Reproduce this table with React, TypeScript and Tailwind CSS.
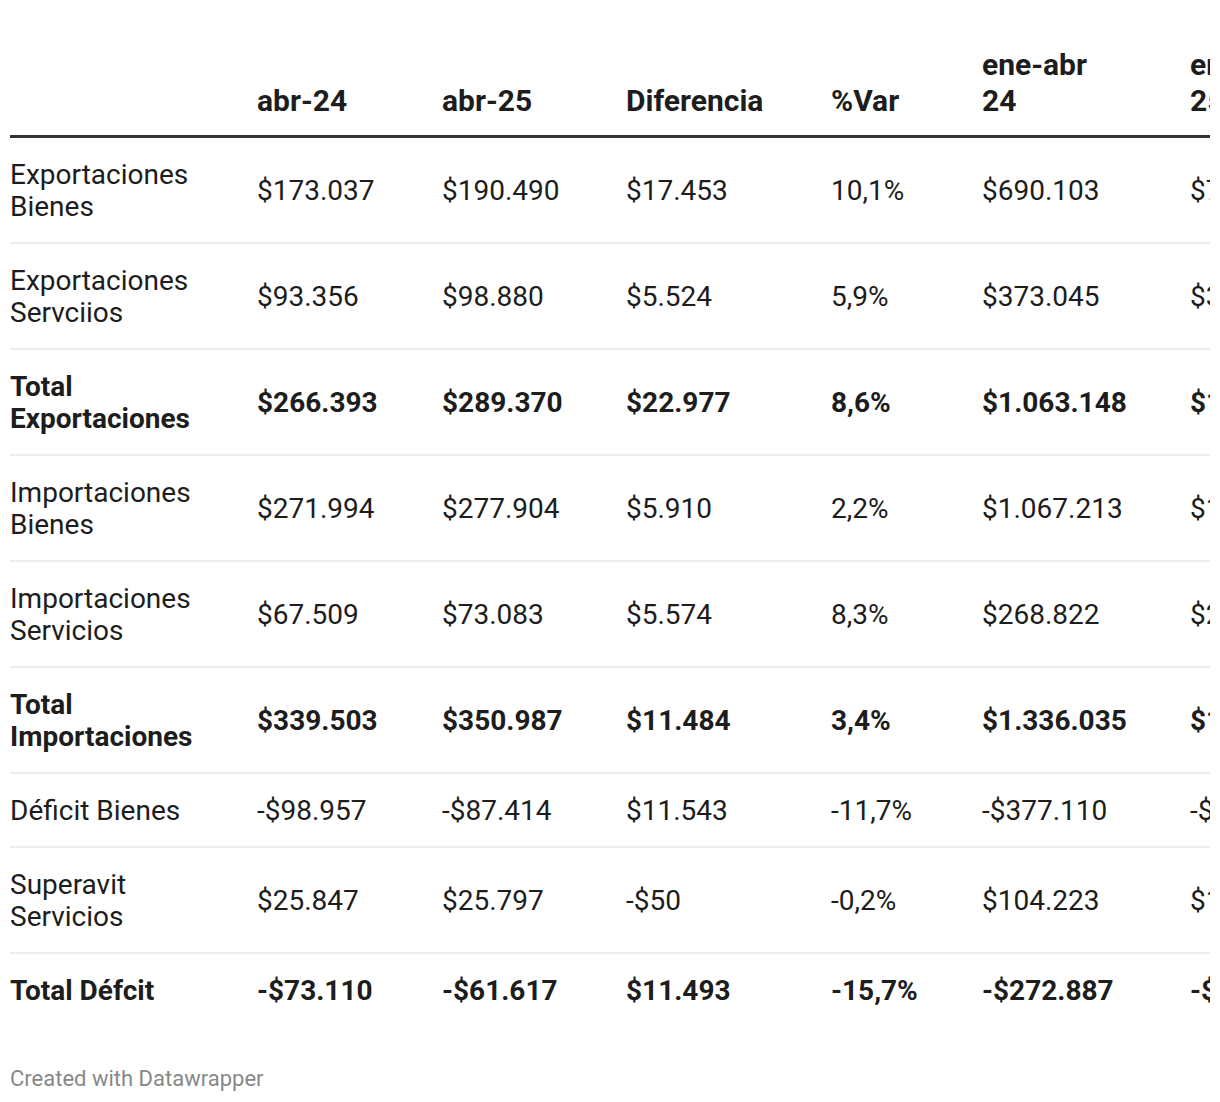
const columns = ["", "abr-24", "abr-25", "Diferencia", "%Var", "ene-abr 24", "ene-abr 25"];

type Row = {
  label: string;
  values: string[];
  bold?: boolean;
};

const rows: Row[] = [
  { label: "Exportaciones Bienes", values: ["$173.037", "$190.490", "$17.453", "10,1%", "$690.103", "$770.512"] },
  { label: "Exportaciones Servciios", values: ["$93.356", "$98.880", "$5.524", "5,9%", "$373.045", "$398.112"] },
  { label: "Total Exportaciones", values: ["$266.393", "$289.370", "$22.977", "8,6%", "$1.063.148", "$1.168.624"], bold: true },
  { label: "Importaciones Bienes", values: ["$271.994", "$277.904", "$5.910", "2,2%", "$1.067.213", "$1.102.511"] },
  { label: "Importaciones Servicios", values: ["$67.509", "$73.083", "$5.574", "8,3%", "$268.822", "$287.302"] },
  { label: "Total Importaciones", values: ["$339.503", "$350.987", "$11.484", "3,4%", "$1.336.035", "$1.389.813"], bold: true },
  { label: "Déficit Bienes", values: ["-$98.957", "-$87.414", "$11.543", "-11,7%", "-$377.110", "-$331.999"] },
  { label: "Superavit Servicios", values: ["$25.847", "$25.797", "-$50", "-0,2%", "$104.223", "$110.810"] },
  { label: "Total Défcit", values: ["-$73.110", "-$61.617", "$11.493", "-15,7%", "-$272.887", "-$221.189"], bold: true },
];

const colWidths = ["w-[247px]", "w-[185px]", "w-[184px]", "w-[205px]", "w-[151px]", "w-[208px]", "w-[208px]"];

export default function App() {
  return (
    <div className="min-h-screen bg-white px-[10px] pt-[47px] text-[#1d1d1d] [font-family:Roboto,'Liberation_Sans',sans-serif]">
      <div className="w-[1200px] overflow-hidden">
        <table className="w-[1388px] table-fixed border-collapse">
          <colgroup>
            {colWidths.map((w, i) => (
              <col key={i} className={w} />
            ))}
          </colgroup>
          <thead>
            <tr className="border-b-[3px] border-[#333333]">
              {columns.map((c, i) => (
                <th
                  key={i}
                  className="pb-[16px] pr-[20px] text-left align-bottom text-[30px] font-bold leading-[36px]"
                >
                  <span className="block max-w-[130px]">{c}</span>
                </th>
              ))}
            </tr>
          </thead>
          <tbody>
            {rows.map((r, ri) => (
              <tr
                key={r.label}
                className={ri < rows.length - 1 ? "border-b-2 border-[#ececec]" : ""}
              >
                <td
                  className={`pt-[21px] pb-[19px] pr-[20px] align-middle text-[28px] leading-[32px] ${
                    r.bold ? "font-bold" : "font-normal"
                  }`}
                >
                  {r.label}
                </td>
                {r.values.map((v, vi) => (
                  <td
                    key={vi}
                    className={`whitespace-nowrap pt-[21px] pb-[19px] align-middle text-[28px] leading-[32px] ${
                      r.bold ? "font-bold" : "font-normal"
                    }`}
                  >
                    {v}
                  </td>
                ))}
              </tr>
            ))}
          </tbody>
        </table>
      </div>
      <p className="mt-[40px] text-[22px] leading-[26px] text-[#888888]">Created with Datawrapper</p>
    </div>
  );
}
